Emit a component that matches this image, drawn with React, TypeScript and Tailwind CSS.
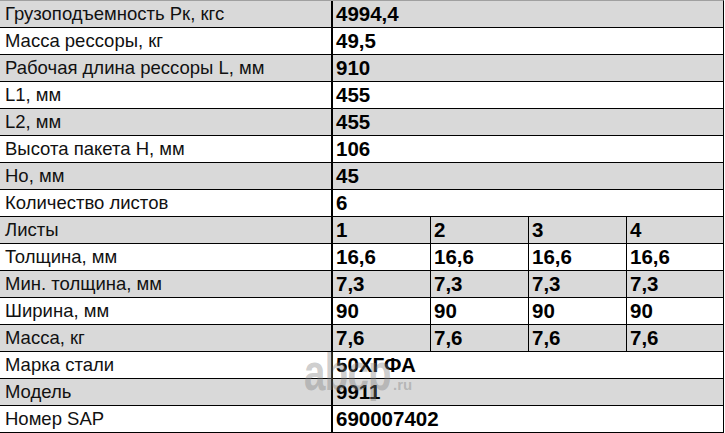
const rows: { label: string; values: string[] }[] = [
  { label: "Грузоподъемность Рк, кгс", values: ["4994,4"] },
  { label: "Масса рессоры, кг", values: ["49,5"] },
  { label: "Рабочая длина рессоры L, мм", values: ["910"] },
  { label: "L1, мм", values: ["455"] },
  { label: "L2, мм", values: ["455"] },
  { label: "Высота пакета H, мм", values: ["106"] },
  { label: "Но, мм", values: ["45"] },
  { label: "Количество листов", values: ["6"] },
  { label: "Листы", values: ["1", "2", "3", "4"] },
  { label: "Толщина, мм", values: ["16,6", "16,6", "16,6", "16,6"] },
  { label: "Мин. толщина, мм", values: ["7,3", "7,3", "7,3", "7,3"] },
  { label: "Ширина, мм", values: ["90", "90", "90", "90"] },
  { label: "Масса, кг", values: ["7,6", "7,6", "7,6", "7,6"] },
  { label: "Марка стали", values: ["50ХГФА"] },
  { label: "Модель", values: ["9911"] },
  { label: "Номер SAP", values: ["690007402"] },
];

const colWidths = ["w-[98px] border-r border-black", "w-[98px] border-r border-black", "w-[98px] border-r border-black", "flex-1"];

function App() {
  return (
    <div className="relative w-[725px] h-[433px] bg-white overflow-hidden font-['Liberation_Sans',Arial,sans-serif] text-[18.5px] text-[#111]">
      <div className="w-[724px] border-r border-black border-t border-t-[#a0a0a0]">
        {rows.map((row, i) => (
          <div
            key={i}
            className={`flex h-[27px] border-b border-black leading-[25px] ${i % 2 === 0 ? "bg-[#d9d9d9]" : "bg-white"}`}
          >
            <div className="w-[333px] shrink-0 border-r-2 border-black pl-[5px] whitespace-nowrap">
              {row.label}
            </div>
            {row.values.length === 1 ? (
              <div className="flex-1 pl-[3px] font-bold text-[20.5px] text-black">{row.values[0]}</div>
            ) : (
              row.values.map((v, j) => (
                <div key={j} className={`${colWidths[j]} shrink-0 pl-[3px] font-bold text-[20.5px] text-black`}>
                  {v}
                </div>
              ))
            )}
          </div>
        ))}
      </div>

      {/* watermark */}
      <span className="absolute left-[304px] top-[346px] origin-left scale-x-[0.74] text-[52px] leading-none font-bold tracking-[-1px] text-[rgba(128,128,128,0.4)] pointer-events-none select-none">
        abcp
      </span>
      <span className="absolute left-[393px] top-[377px] text-[15px] leading-none font-bold text-[rgba(128,128,128,0.4)] pointer-events-none select-none">
        .ru
      </span>
    </div>
  );
}

export default App;
